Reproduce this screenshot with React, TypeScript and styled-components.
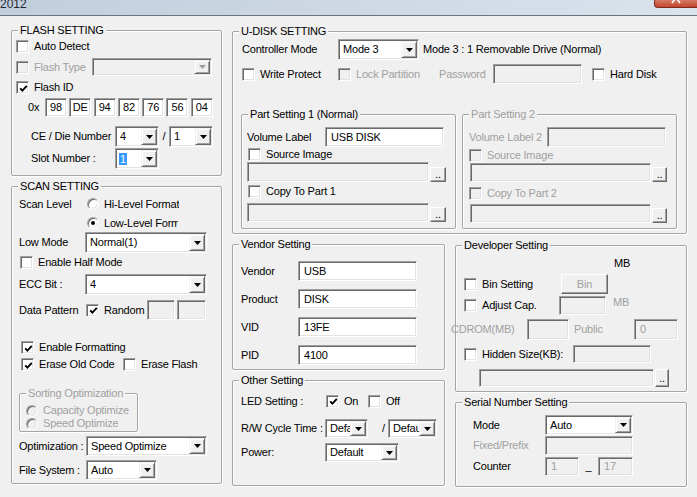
import React, { FC, ReactNode } from "react";
import styled, { createGlobalStyle } from "styled-components";

const HEX_ID = ["98", "DE", "94", "82", "76", "56", "04"];

const VENDOR_ROWS = [
  { label: "Vendor", value: "USB" },
  { label: "Product", value: "DISK" },
  { label: "VID", value: "13FE" },
  { label: "PID", value: "4100" },
];

type CheckProps = {
  label?: string;
  checked?: boolean;
  disabled?: boolean;
  w?: number;
  ml?: number;
};

const Check: FC<CheckProps> = ({ label, checked, disabled, w, ml }) => (
  <CheckItem $w={w} $ml={ml} $disabled={disabled}>
    <Box $disabled={disabled}>
      {checked && (
        <svg width="9" height="9" viewBox="0 0 9 9">
          <path
            d="M1.2 4.3 L3.4 6.6 L7.8 1.8"
            fill="none"
            stroke="#000"
            strokeWidth="1.9"
          />
        </svg>
      )}
    </Box>
    {label && <span>{label}</span>}
  </CheckItem>
);

type RadioProps = {
  label: string;
  checked?: boolean;
  disabled?: boolean;
  clip?: number;
};

const Radio: FC<RadioProps> = ({ label, checked, disabled, clip }) => (
  <CheckItem $disabled={disabled}>
    <RadioDot $checked={checked} $disabled={disabled} />
    <RadioText $clip={clip}>{label}</RadioText>
  </CheckItem>
);

type ComboProps = {
  value?: string;
  w: number;
  h: number;
  disabled?: boolean;
  selected?: boolean;
};

const Combo: FC<ComboProps> = ({ value, w, h, disabled, selected }) => (
  <ComboBox $w={w} $h={h} $disabled={disabled}>
    <ComboField>{selected ? <Selected>{value}</Selected> : value}</ComboField>
    <ArrowButton>
      <svg width="7" height="4" viewBox="0 0 7 4">
        <polygon points="0,0 7,0 3.5,4" fill={disabled ? "#a0a0a0" : "#000"} />
      </svg>
    </ArrowButton>
  </ComboBox>
);

type GroupProps = {
  title: string;
  w: number;
  h: number;
  mt?: number;
  pl?: number;
  disabled?: boolean;
  children?: ReactNode;
};

const Group: FC<GroupProps> = ({ title, w, h, mt = 0, pl = 0, disabled, children }) => (
  <GroupBox $w={w} $h={h} $mt={mt} $pl={pl}>
    <GroupTitle $disabled={disabled}>{title}</GroupTitle>
    {children}
  </GroupBox>
);

const App: FC = () => (
  <>
    <GlobalStyle />
    <Window>
      <TitleBar>
        <Caption>2012</Caption>
        <CloseButton>
          <svg width="12" height="4" viewBox="0 0 12 4">
            <path d="M5 -1 L2 3 M7 -1 L10 3" stroke="#fff" strokeWidth="1.6" />
          </svg>
        </CloseButton>
      </TitleBar>

      <Body>
        <Column $w={211} $mt={14}>
          <Group title="FLASH SETTING" w={211} h={146} pl={4}>
            <Row $h={20} $mt={5}>
              <Check label="Auto Detect" />
            </Row>
            <Row $h={22}>
              <Check label="Flash Type" disabled w={76} />
              <Combo w={120} h={18} disabled />
            </Row>
            <Row $h={19}>
              <Check label="Flash ID" checked />
            </Row>
            <Row $h={20}>
              <Text $w={17} $ml={12}>0x</Text>
              <HexList>
                {HEX_ID.map((b) => (
                  <TextBox key={b} $w={22} $h={19} $center>
                    {b}
                  </TextBox>
                ))}
              </HexList>
            </Row>
            <Row $h={21} $mt={9}>
              <Text $w={84} $ml={15}>CE / Die Number :</Text>
              <Combo value="4" w={44} h={21} />
              <Text $w={10} $center>/</Text>
              <Combo value="1" w={44} h={21} />
            </Row>
            <Row $h={21} $mt={1}>
              <Text $w={84} $ml={15}>Slot Number :</Text>
              <Combo value="1" w={44} h={21} selected />
            </Row>
          </Group>

          <Group title="SCAN SETTING" w={211} h={298} mt={10} pl={7}>
            <Row $h={18} $mt={8}>
              <Text $w={68}>Scan Level</Text>
              <Radio label="Hi-Level Format" />
            </Row>
            <Row $h={18} $mt={1} $ml={68}>
              <Radio label="Low-Level Format" checked clip={74} />
            </Row>
            <Row $h={21}>
              <Text $w={66}>Low Mode</Text>
              <Combo value="Normal(1)" w={122} h={21} />
            </Row>
            <Row $h={19} $ml={1}>
              <Check label="Enable Half Mode" />
            </Row>
            <Row $h={21} $mt={2}>
              <Text $w={66}>ECC Bit :</Text>
              <Combo value="4" w={122} h={21} />
            </Row>
            <Row $h={20} $mt={5}>
              <Text $w={67}>Data Pattern</Text>
              <Check label="Random" checked w={61} />
              <TextBox $w={28} $h={20} $disabled />
              <TextBox $w={29} $h={20} $disabled $ml={2} />
            </Row>
            <Row $h={17} $mt={19} $ml={2}>
              <Check label="Enable Formatting" checked />
            </Row>
            <Row $h={17} $ml={2}>
              <Check label="Erase Old Code" checked w={102} />
              <Check label="Erase Flash" />
            </Row>
            <Group title="Sorting Optimization" w={119} h={39} mt={20} pl={6} disabled>
              <Row $h={13} $mt={10}>
                <Radio label="Capacity Optimize" disabled />
              </Row>
              <Row $h={13}>
                <Radio label="Speed Optimize" disabled />
              </Row>
            </Group>
            <Row $h={20} $mt={4}>
              <Text $w={67}>Optimization :</Text>
              <Combo value="Speed Optimize" w={121} h={20} />
            </Row>
            <Row $h={20} $mt={4}>
              <Text $w={67}>File System :</Text>
              <Combo value="Auto" w={71} h={20} />
            </Row>
          </Group>
        </Column>

        <Column $w={455} $mt={15}>
          <Group title="U-DISK SETTING" w={455} h={203} pl={9}>
            <Row $h={21} $mt={7}>
              <Text $w={96}>Controller Mode</Text>
              <Combo value="Mode 3" w={81} h={21} />
              <Text $ml={4}>Mode 3 : 1 Removable Drive (Normal)</Text>
            </Row>
            <Row $h={20} $mt={4}>
              <Check label="Write Protect" w={96} />
              <Check label="Lock Partition" disabled w={101} />
              <Text $w={54} $disabled>Password</Text>
              <TextBox $w={89} $h={20} $disabled />
              <Check label="Hard Disk" ml={10} />
            </Row>

            <PartRow>
              <Group title="Part Setting 1 (Normal)" w={215} h={115} pl={5}>
                <Row $h={20} $mt={12}>
                  <Text $w={78}>Volume Label</Text>
                  <TextBox $w={119} $h={20}>USB DISK</TextBox>
                </Row>
                <Row $h={15} $ml={1}>
                  <Check label="Source Image" />
                </Row>
                <Row $h={20}>
                  <TextBox $w={182} $h={20} $disabled />
                  <DotButton $w={16} $h={15}>..</DotButton>
                </Row>
                <Row $h={18} $ml={1}>
                  <Check label="Copy To Part 1" />
                </Row>
                <Row $h={19} $mt={3}>
                  <TextBox $w={182} $h={19} $disabled />
                  <DotButton $w={16} $h={15}>..</DotButton>
                </Row>
              </Group>

              <Group title="Part Setting 2" w={215} h={115} pl={6} disabled>
                <Row $h={20} $mt={12}>
                  <Text $w={78} $disabled>Volume Label 2</Text>
                  <TextBox $w={119} $h={20} $disabled />
                </Row>
                <Row $h={16}>
                  <Check label="Source Image" disabled />
                </Row>
                <Row $h={19} $ml={1}>
                  <TextBox $w={181} $h={19} $disabled />
                  <DotButton $w={15} $h={15}>..</DotButton>
                </Row>
                <Row $h={22}>
                  <Check label="Copy To Part 2" disabled />
                </Row>
                <Row $h={19} $ml={1}>
                  <TextBox $w={181} $h={19} $disabled />
                  <DotButton $w={15} $h={15}>..</DotButton>
                </Row>
              </Group>
            </PartRow>
          </Group>

          <BottomRow>
            <Column $w={213}>
              <Group title="Vendor Setting" w={213} h={126} pl={8}>
                {VENDOR_ROWS.map((row, i) => (
                  <Row key={row.label} $h={20} $mt={i === 0 ? 16 : 8}>
                    <Text $w={57}>{row.label}</Text>
                    <TextBox $w={119} $h={20}>{row.value}</TextBox>
                  </Row>
                ))}
              </Group>

              <Group title="Other Setting" w={213} h={106} mt={10} pl={8}>
                <Row $h={20} $mt={10}>
                  <Text $w={85}>LED Setting :</Text>
                  <Check label="On" checked w={42} />
                  <Check label="Off" />
                </Row>
                <Row $h={19} $mt={8}>
                  <Text $w={84}>R/W Cycle Time :</Text>
                  <Combo value="Default" w={43} h={19} />
                  <Text $w={6} $ml={14}>/</Text>
                  <Combo value="Default" w={49} h={19} />
                </Row>
                <Row $h={19} $mt={5}>
                  <Text $w={84}>Power:</Text>
                  <Combo value="Default" w={74} h={19} />
                </Row>
              </Group>
            </Column>

            <Column $w={232} $mt={1}>
              <Group title="Developer Setting" w={232} h={147} pl={8}>
                <Row $h={14} $mt={10}>
                  <Text $ml={150}>MB</Text>
                </Row>
                <Row $h={20} $mt={4}>
                  <Check label="Bin Setting" w={96} />
                  <DotButton $w={47} $h={20} $disabled $center>
                    Bin
                  </DotButton>
                </Row>
                <Row $h={19} $mt={2}>
                  <Check label="Adjust Cap." w={95} />
                  <TextBox $w={47} $h={19} $disabled />
                  <Text $ml={7} $disabled $top>MB</Text>
                </Row>
                <Row $h={21} $mt={4} $ml={-13}>
                  <Text $w={76} $disabled>CDROM(MB)</Text>
                  <TextBox $w={42} $h={21} $disabled />
                  <Text $w={60} $ml={5} $disabled>Public</Text>
                  <TextBox $w={44} $h={21} $disabled>0</TextBox>
                </Row>
                <Row $h={18} $mt={5}>
                  <Check label="Hidden Size(KB):" w={109} />
                  <TextBox $w={78} $h={18} $disabled />
                </Row>
                <Row $h={18} $mt={6} $ml={15}>
                  <TextBox $w={175} $h={18} $disabled />
                  <DotButton $w={14} $h={18}>..</DotButton>
                </Row>
              </Group>

              <Group title="Serial Number Setting" w={232} h={85} mt={10} pl={17}>
                <Row $h={20} $mt={12}>
                  <Text $w={72}>Mode</Text>
                  <Combo value="Auto" w={88} h={20} />
                </Row>
                <Row $h={19} $mt={1}>
                  <Text $w={72} $disabled>Fixed/Prefix</Text>
                  <TextBox $w={88} $h={19} $disabled />
                </Row>
                <Row $h={19} $mt={2}>
                  <Text $w={72}>Counter</Text>
                  <TextBox $w={34} $h={19} $disabled>1</TextBox>
                  <Text $w={19} $center>_</Text>
                  <TextBox $w={35} $h={19} $disabled>17</TextBox>
                </Row>
              </Group>
            </Column>
          </BottomRow>
        </Column>
      </Body>
    </Window>
  </>
);

const GlobalStyle = createGlobalStyle`
  * {
    box-sizing: border-box;
  }

  html,
  body {
    margin: 0;
    padding: 0;
    background: #f0f0f0;
  }
`;

const sunken = `
  border: 1px solid;
  border-color: #a0a0a0 #ffffff #ffffff #a0a0a0;
  box-shadow: inset 1px 1px 0 #696969, inset -1px -1px 0 #e3e3e3;
`;

const raised = `
  border: 1px solid;
  border-color: #ffffff #696969 #696969 #ffffff;
  box-shadow: inset -1px -1px 0 #a0a0a0;
`;

const Window = styled.div`
  width: 697px;
  height: 497px;
  overflow: hidden;
  background: #f0f0f0;
  font-family: "Liberation Sans", Arial, sans-serif;
  font-size: 11px;
  letter-spacing: -0.2px;
  color: #000;
`;

const TitleBar = styled.div`
  height: 16px;
  display: flex;
  justify-content: space-between;
  align-items: flex-start;
  overflow: hidden;
  background: linear-gradient(90deg, #c1cedc 0%, #ccd7e3 45%, #dbe3ec 100%);
  border-bottom: 1px solid #6c737b;
`;

const Caption = styled.span`
  font-size: 12px;
  line-height: 12px;
  letter-spacing: 0;
  margin-top: -2px;
  color: #1c2733;
`;

const CloseButton = styled.div`
  width: 43px;
  height: 8px;
  flex-shrink: 0;
  display: flex;
  justify-content: center;
  align-items: flex-start;
  background: linear-gradient(#d67a64, #c2452e);
  border: 1px solid #7e2a1c;
  border-top: none;
  border-right: none;
  border-bottom-left-radius: 4px;
`;

const Body = styled.div`
  display: flex;
  align-items: flex-start;
  gap: 10px;
  padding-left: 11px;
`;

const Column = styled.div<{ $w: number; $mt?: number }>`
  display: flex;
  flex-direction: column;
  flex-shrink: 0;
  width: ${({ $w }) => $w}px;
  margin-top: ${({ $mt }) => $mt ?? 0}px;
`;

const BottomRow = styled.div`
  display: flex;
  align-items: flex-start;
  gap: 10px;
  margin-top: 10px;
`;

const PartRow = styled.div`
  display: flex;
  gap: 6px;
  margin-top: 30px;
  margin-left: -1px;
`;

const GroupBox = styled.div<{ $w: number; $h: number; $mt: number; $pl: number }>`
  position: relative;
  display: flex;
  flex-direction: column;
  flex-shrink: 0;
  width: ${({ $w }) => $w}px;
  height: ${({ $h }) => $h}px;
  margin-top: ${({ $mt }) => $mt}px;
  padding-left: ${({ $pl }) => $pl}px;
  border: 1px solid #a5a5a5;
  border-radius: 2px;
  box-shadow: inset 1px 1px 0 #ffffff, 1px 1px 0 #ffffff;
`;

const GroupTitle = styled.span<{ $disabled?: boolean }>`
  position: absolute;
  top: -8px;
  left: 6px;
  padding: 0 2px;
  line-height: 14px;
  white-space: nowrap;
  background: #f0f0f0;
  color: ${({ $disabled }) => ($disabled ? "#a0a0a0" : "#000")};
`;

const Row = styled.div<{ $h: number; $mt?: number; $ml?: number }>`
  display: flex;
  align-items: center;
  flex-shrink: 0;
  height: ${({ $h }) => $h}px;
  margin-top: ${({ $mt }) => $mt ?? 0}px;
  margin-left: ${({ $ml }) => $ml ?? 0}px;
`;

const Text = styled.span<{
  $w?: number;
  $ml?: number;
  $disabled?: boolean;
  $center?: boolean;
  $top?: boolean;
}>`
  flex-shrink: 0;
  white-space: nowrap;
  line-height: 13px;
  width: ${({ $w }) => ($w ? `${$w}px` : "auto")};
  margin-left: ${({ $ml }) => $ml ?? 0}px;
  text-align: ${({ $center }) => ($center ? "center" : "left")};
  align-self: ${({ $top }) => ($top ? "flex-start" : "center")};
  color: ${({ $disabled }) => ($disabled ? "#a0a0a0" : "#000")};
`;

const CheckItem = styled.span<{ $w?: number; $ml?: number; $disabled?: boolean }>`
  display: flex;
  align-items: center;
  flex-shrink: 0;
  white-space: nowrap;
  line-height: 13px;
  width: ${({ $w }) => ($w ? `${$w}px` : "auto")};
  margin-left: ${({ $ml }) => $ml ?? 0}px;
  color: ${({ $disabled }) => ($disabled ? "#a0a0a0" : "#000")};
`;

const Box = styled.span<{ $disabled?: boolean }>`
  width: 13px;
  height: 13px;
  flex-shrink: 0;
  display: flex;
  align-items: center;
  justify-content: center;
  margin-right: 5px;
  padding: 1px 0 0 1px;
  background: ${({ $disabled }) => ($disabled ? "#f0f0f0" : "#fff")};
  ${sunken}
`;

const RadioDot = styled.span<{ $checked?: boolean; $disabled?: boolean }>`
  width: 12px;
  height: 12px;
  flex-shrink: 0;
  display: flex;
  align-items: center;
  justify-content: center;
  margin-right: 5px;
  border-radius: 50%;
  background: ${({ $disabled }) => ($disabled ? "#f0f0f0" : "#fff")};
  ${sunken}

  &::after {
    content: "";
    width: 4px;
    height: 4px;
    border-radius: 50%;
    background: #000;
    display: ${({ $checked }) => ($checked ? "block" : "none")};
  }
`;

const RadioText = styled.span<{ $clip?: number }>`
  overflow: hidden;
  max-width: ${({ $clip }) => ($clip ? `${$clip}px` : "none")};
`;

const ComboBox = styled.div<{ $w: number; $h: number; $disabled?: boolean }>`
  display: flex;
  flex-shrink: 0;
  width: ${({ $w }) => $w}px;
  height: ${({ $h }) => $h}px;
  padding: 1px;
  background: ${({ $disabled }) => ($disabled ? "#f0f0f0" : "#fff")};
  ${sunken}
`;

const ComboField = styled.span`
  flex: 1;
  min-width: 0;
  display: flex;
  align-items: center;
  overflow: hidden;
  white-space: nowrap;
  padding-left: 3px;
  line-height: 13px;
`;

const Selected = styled.span`
  background: #3399ff;
  color: #fff;
  padding: 0 1px;
  margin-left: -1px;
  line-height: 12px;
`;

const ArrowButton = styled.span`
  width: 16px;
  flex-shrink: 0;
  display: flex;
  align-items: center;
  justify-content: center;
  background: #f0f0f0;
  border: 1px solid;
  border-color: #f0f0f0 #696969 #696969 #f0f0f0;
  box-shadow: inset 1px 1px 0 #fff, inset -1px -1px 0 #a0a0a0;
`;

const HexList = styled.div`
  display: flex;
  gap: 2.3px;
`;

const TextBox = styled.div<{
  $w: number;
  $h: number;
  $ml?: number;
  $disabled?: boolean;
  $center?: boolean;
}>`
  display: flex;
  align-items: center;
  justify-content: ${({ $center }) => ($center ? "center" : "flex-start")};
  flex-shrink: 0;
  width: ${({ $w }) => $w}px;
  height: ${({ $h }) => $h}px;
  margin-left: ${({ $ml }) => $ml ?? 0}px;
  padding: 0 ${({ $center }) => ($center ? 0 : 5)}px;
  overflow: hidden;
  white-space: nowrap;
  line-height: 13px;
  background: ${({ $disabled }) => ($disabled ? "#f0f0f0" : "#fff")};
  color: ${({ $disabled }) => ($disabled ? "#a0a0a0" : "#000")};
  ${sunken}
`;

const DotButton = styled.div<{
  $w: number;
  $h: number;
  $disabled?: boolean;
  $center?: boolean;
}>`
  display: flex;
  align-items: center;
  justify-content: center;
  flex-shrink: 0;
  width: ${({ $w }) => $w}px;
  height: ${({ $h }) => $h}px;
  margin-left: 1px;
  align-self: ${({ $center }) => ($center ? "center" : "flex-end")};
  line-height: 11px;
  background: #f0f0f0;
  color: ${({ $disabled }) => ($disabled ? "#a0a0a0" : "#000")};
  ${raised}
`;

export default App;
